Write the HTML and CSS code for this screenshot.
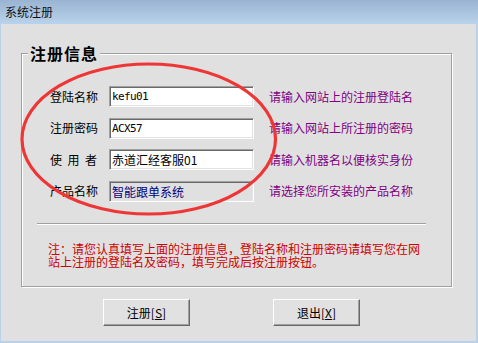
FILE: index.html
```html
<!DOCTYPE html>
<html lang="zh-CN">
<head>
<meta charset="utf-8">
<title>系统注册</title>
<link rel="stylesheet" href="styles.css">
</head>
<body>
<div class="window">
  <div class="titlebar"><span class="title">系统注册</span></div>
  <div class="client">
    <div class="group">
      <div class="group-title">注册信息</div>
      <div class="form">
        <span class="label">登陆名称</span>
        <input class="field mono" value="kefu01">
        <span class="hint">请输入网站上的注册登陆名</span>

        <span class="label">注册密码</span>
        <input class="field mono" value="ACX57">
        <span class="hint">请输入网站上所注册的密码</span>

        <span class="label spaced">使用者</span>
        <input class="field" value="赤道汇经客服01">
        <span class="hint">请输入机器名以便核实身份</span>

        <span class="label">产品名称</span>
        <input class="field disabled" value="智能跟单系统" readonly>
        <span class="hint">请选择您所安装的产品名称</span>
      </div>
      <div class="sep"></div>
      <p class="note">注：请您认真填写上面的注册信息，登陆名称和注册密码请填写您在网<br>站上注册的登陆名及密码，填写完成后按注册按钮。</p>
    </div>
    <div class="buttons">
      <button class="btn">注册[<u>S</u>]</button>
      <button class="btn">退出[<u>X</u>]</button>
    </div>
  </div>
  <svg class="mark" width="478" height="343" viewBox="0 0 478 343">
    <ellipse cx="148.75" cy="139" rx="126.75" ry="75" fill="none" stroke="#ef3636" stroke-width="3.2"/>
  </svg>
</div>
</body>
</html>
```
FILE: styles.css
```css
html, body {
  margin: 0;
  padding: 0;
}
body {
  width: 478px;
  height: 343px;
  overflow: hidden;
  font-family: "Noto Sans CJK SC", sans-serif;
  font-size: 12px;
  background: #e0e0e0;
}
.window {
  position: relative;
  width: 478px;
  height: 343px;
  display: flex;
  flex-direction: column;
}
.titlebar {
  height: 24px;
  flex: none;
  background: linear-gradient(#99b3d1, #bad3ec);
  box-sizing: border-box;
  padding: 4px 0 0 5px;
  line-height: 15px;
}
.title {
  color: #111;
  font-size: 12px;
}
.client {
  flex: 1;
  background: #e0e0e0;
  border-left: 1px solid #b9d1ea;
  border-right: 2px solid #b9d1ea;
  border-bottom: 2px solid #b9d1ea;
}
.group {
  margin: 29px 0 0 20px;
  width: 431px;
  box-sizing: border-box;
  border: 1px solid #a0a0a0;
  box-shadow: 1px 1px 0 #fff, inset 1px 1px 0 #fff;
}
.group-title {
  width: max-content;
  margin: -10px 0 0 6px;
  padding: 0 2px;
  background: #e0e0e0;
  font-size: 16px;
  font-weight: bold;
  line-height: 18px;
  letter-spacing: 1px;
  color: #000;
}
.form {
  display: grid;
  grid-template-columns: 59px 145px auto;
  grid-auto-rows: 21px;
  row-gap: 10.5px;
  align-items: center;
  margin: 24px 0 0 28px;
}
.label {
  color: #000;
  line-height: 14px;
}
.spaced {
  letter-spacing: 5.5px;
}
.field {
  box-sizing: border-box;
  width: 145px;
  height: 21px;
  margin: 0;
  padding: 0 0 0 2px;
  border: 1px solid;
  border-color: #a0a0a0 #fff #fff #a0a0a0;
  box-shadow: inset 1px 1px 0 #696969, inset -1px -1px 0 #e3e3e3;
  background: #fff;
  color: #000;
  font-family: "Noto Sans CJK SC", sans-serif;
  font-size: 12px;
  outline: none;
}
.mono {
  font-family: "DejaVu Sans Mono", monospace;
  font-size: 11px;
  letter-spacing: -0.6px;
}
.disabled {
  background: #e0e0e0;
  color: #000080;
}
.hint {
  margin-left: 15px;
  color: #800080;
  line-height: 14px;
  white-space: nowrap;
}
.sep {
  width: 389px;
  height: 1px;
  margin: 21.5px 0 0 15px;
  background: #a0a0a0;
  border-bottom: 1px solid #fff;
}
.note {
  margin: 17px 0 18px 26px;
  color: #cc0000;
  line-height: 13px;
  white-space: nowrap;
}
.buttons {
  display: flex;
  gap: 83px;
  margin: 12px 0 0 102px;
}
.btn {
  width: 87px;
  height: 27px;
  margin: 0;
  padding: 0;
  background: #e1e1e1;
  border: 1px solid;
  border-color: #fff #696969 #696969 #fff;
  box-shadow: inset -1px -1px 0 #a0a0a0;
  color: #000;
  font-family: "Noto Sans CJK SC", sans-serif;
  font-size: 12px;
}
.mark {
  position: absolute;
  left: 0;
  top: 0;
  pointer-events: none;
}
```
